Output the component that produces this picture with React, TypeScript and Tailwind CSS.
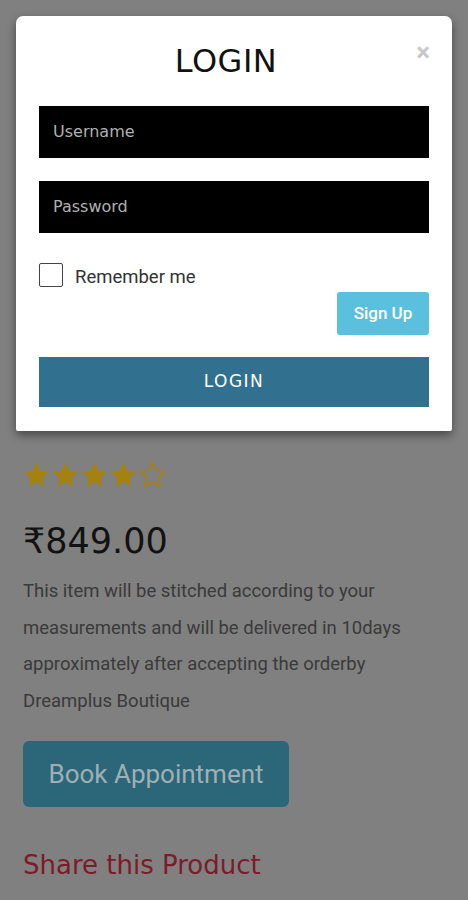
import React from "react";

const Star = ({ filled }: { filled: boolean }) => (
  <svg width="29" height="29" viewBox="0 0 24 24">
    <path
      d="M12 1.5l3.1 6.6 7.2.9-5.3 5 1.4 7.1L12 17.6l-6.4 3.5 1.4-7.1-5.3-5 7.2-.9z"
      fill={filled ? "#a3820f" : "none"}
      stroke="#a3820f"
      strokeWidth={filled ? 0 : 1.4}
      strokeLinejoin="round"
    />
  </svg>
);

export default function App() {
  return (
    <div className="relative min-h-[900px] w-[468px] overflow-hidden bg-[#808080]" style={{ fontFamily: "Roboto, sans-serif" }}>
      {/* page content behind overlay */}
      <div className="flex flex-col px-[23px] pt-[461px]">
        <div className="flex gap-0 -ml-[1px]">
          <Star filled />
          <Star filled />
          <Star filled />
          <Star filled />
          <Star filled={false} />
        </div>
        <div className="mt-[31px] text-[35px] leading-[40px] text-[#121212]" style={{ fontFamily: "'DejaVu Sans', sans-serif", fontWeight: 400 }}>
          ₹849.00
        </div>
        <p className="mt-[12px] text-[18.5px] leading-[36.5px] text-[#3a3a3a]">
          This item will be stitched according to your measurements and will be delivered in 10days approximately after accepting the orderby Dreamplus Boutique
        </p>
        <div className="mt-[22px]">
          <button className="h-[66px] w-[266px] rounded-[6px] bg-[#2b6779] text-[26px] text-[#9fb0b5]">
            Book Appointment
          </button>
        </div>
        <div className="mt-[39px] text-[26px] text-[#7d1b2b]" style={{ fontFamily: "'DejaVu Sans', sans-serif" }}>
          Share this Product
        </div>
      </div>

      {/* modal */}
      <div className="absolute left-[16px] top-[16px] w-[436px] rounded-t-[7px] rounded-b-[2px] bg-white px-[23px] pb-[24px] shadow-[0_4px_10px_rgba(0,0,0,0.45)]">
        <div className="relative flex h-[90px] items-center justify-center pb-[1px] pr-[16px]">
          <span className="text-[32px] tracking-[0.5px] text-[#111]" style={{ fontFamily: "'DejaVu Sans', sans-serif", fontWeight: 400 }}>
            LOGIN
          </span>
          <span className="absolute right-[-1px] top-[23px] text-[26px] font-bold leading-none text-[#c8c8c8]">×</span>
        </div>
        <div className="flex flex-col gap-[23px]">
          <div className="flex h-[52px] items-center bg-black px-[14px] text-[16px] text-[#b0b0b0]" style={{ fontFamily: "'DejaVu Sans', sans-serif" }}>
            Username
          </div>
          <div className="flex h-[52px] items-center bg-black px-[14px] text-[16px] text-[#b0b0b0]" style={{ fontFamily: "'DejaVu Sans', sans-serif" }}>
            Password
          </div>
        </div>
        <div className="mt-[28px] flex items-center gap-[12px]">
          <div className="h-[24px] w-[24px] rounded-[2px] border-[1.5px] border-[#444]" />
          <span className="translate-y-[3px] text-[18.5px] text-[#333]">Remember me</span>
        </div>
        <div className="mt-[3px] flex justify-end">
          <button className="h-[43px] w-[92px] rounded-[3px] bg-[#5bc0de] text-[17px] font-medium text-white">Sign Up</button>
        </div>
        <button className="mt-[22px] flex h-[50px] w-full items-center justify-center bg-[#31708f] text-[17px] tracking-[1.5px] text-white" style={{ fontFamily: "'DejaVu Sans', sans-serif" }}>
          LOGIN
        </button>
      </div>
    </div>
  );
}
